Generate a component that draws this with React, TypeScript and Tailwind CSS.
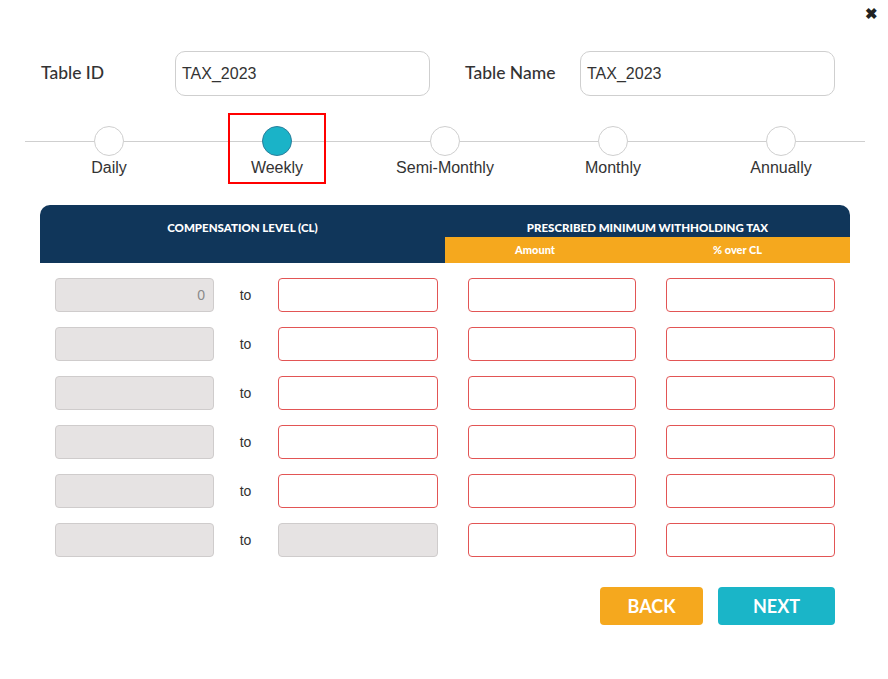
import { useState } from 'react'

const steps = ['Daily', 'Weekly', 'Semi-Monthly', 'Monthly', 'Annually']

const geo = { fontFamily: 'Lato, "Noto Sans", sans-serif' }
const arial = { fontFamily: '"Liberation Sans", Arial, sans-serif' }

function Row({ first, last }: { first?: boolean; last?: boolean }) {
  return (
    <div className="flex items-center h-[34px]">
      <div
        className="w-[159px] h-full rounded-[4px] border border-[#cfcccc] bg-[#e6e3e3] flex items-center justify-end pr-[8px] text-[14px] text-[#8a8a8a]"
        style={arial}
      >
        {first ? '0' : ''}
      </div>
      <div className="w-[64px] text-center text-[14px] text-[#333] pr-[1px]" style={arial}>
        to
      </div>
      {last ? (
        <div className="w-[160px] h-full rounded-[4px] border border-[#cfcccc] bg-[#e6e3e3]" />
      ) : (
        <div className="w-[160px] h-full rounded-[4px] border border-[#e25555] bg-white" />
      )}
      <div className="ml-[30px] w-[168px] h-full rounded-[4px] border border-[#e25555] bg-white" />
      <div className="ml-[30px] w-[169px] h-full rounded-[4px] border border-[#e25555] bg-white" />
    </div>
  )
}

export default function App() {
  const [active, setActive] = useState(1)

  return (
    <div className="relative w-[888px] h-[679px] bg-white overflow-hidden">
      {/* close */}
      <button className="absolute right-[10px] top-[6px] text-[#222] text-[15px] font-bold leading-none" style={arial}>
        ✖
      </button>

      {/* Top fields */}
      <div className="flex items-center pt-[51px] pl-[41px]">
        <div className="w-[134px] text-[17.5px] text-[#333] font-medium" style={geo}>
          Table ID
        </div>
        <div
          className="w-[255px] h-[45px] rounded-[10px] border border-[#cfcfcf] flex items-center pl-[6px] text-[16px] text-[#333]"
          style={arial}
        >
          TAX_2023
        </div>
        <div className="ml-[35px] w-[115px] text-[17.5px] text-[#333] font-medium" style={geo}>
          Table Name
        </div>
        <div
          className="w-[255px] h-[45px] rounded-[10px] border border-[#cfcfcf] flex items-center pl-[6px] text-[16px] text-[#333]"
          style={arial}
        >
          TAX_2023
        </div>
      </div>

      {/* Stepper */}
      <div className="ml-[25px] mt-[30px] w-[840px] grid grid-cols-5">
        {steps.map((s, i) => (
          <div key={s} className="relative flex flex-col items-center" onClick={() => setActive(i)}>
            <div className="w-full flex items-center">
              <div className="flex-1 h-px bg-[#cfcfcf]" />
              <div
                className={
                  i === active
                    ? 'w-[30px] h-[30px] rounded-full bg-[#1ab3c8] border border-[#2a7f9c]'
                    : 'w-[30px] h-[30px] rounded-full bg-white border border-[#cfcfcf]'
                }
              />
              <div className="flex-1 h-px bg-[#cfcfcf]" />
            </div>
            <div className="mt-[2px] text-[16px] text-[#333] leading-[20px]" style={arial}>
              {s}
            </div>
            {i === active && (
              <div className="absolute left-[35px] top-[-13px] w-[98px] h-[71px] border-2 border-[#ff0000]" />
            )}
          </div>
        ))}
      </div>

      {/* Table header */}
      <div className="ml-[40px] mt-[27px] w-[810px] h-[58px] rounded-t-[10px] bg-[#10365a] flex overflow-hidden">
        <div
          className="w-[405px] pt-[17px] text-center text-[11.5px] font-black text-white leading-[12px]"
          style={geo}
        >
          COMPENSATION LEVEL (CL)
        </div>
        <div className="flex-1 flex flex-col">
          <div
            className="h-[32px] pt-[17px] text-center text-[11.5px] font-black text-white leading-[12px]"
            style={geo}
          >
            PRESCRIBED MINIMUM WITHHOLDING TAX
          </div>
          <div className="h-[26px] bg-[#f5a81e] flex items-center text-[11px] font-black text-white" style={geo}>
            <div className="w-[180px] text-center">Amount</div>
            <div className="flex-1 text-center">% over CL</div>
          </div>
        </div>
      </div>

      {/* Rows */}
      <div className="ml-[55px] mt-[15px] flex flex-col gap-[15px]">
        {[0, 1, 2, 3, 4, 5].map((r) => (
          <Row key={r} first={r === 0} last={r === 5} />
        ))}
      </div>

      {/* Buttons */}
      <div className="mt-[30px] w-[835px] flex justify-end gap-[15px]">
        <button
          className="w-[103px] h-[38px] rounded-[4px] bg-[#f5a81e] text-white text-[18px] font-bold"
          style={geo}
        >
          BACK
        </button>
        <button
          className="w-[117px] h-[38px] rounded-[4px] bg-[#1ab5c8] text-white text-[18px] font-bold"
          style={geo}
        >
          NEXT
        </button>
      </div>
    </div>
  )
}
